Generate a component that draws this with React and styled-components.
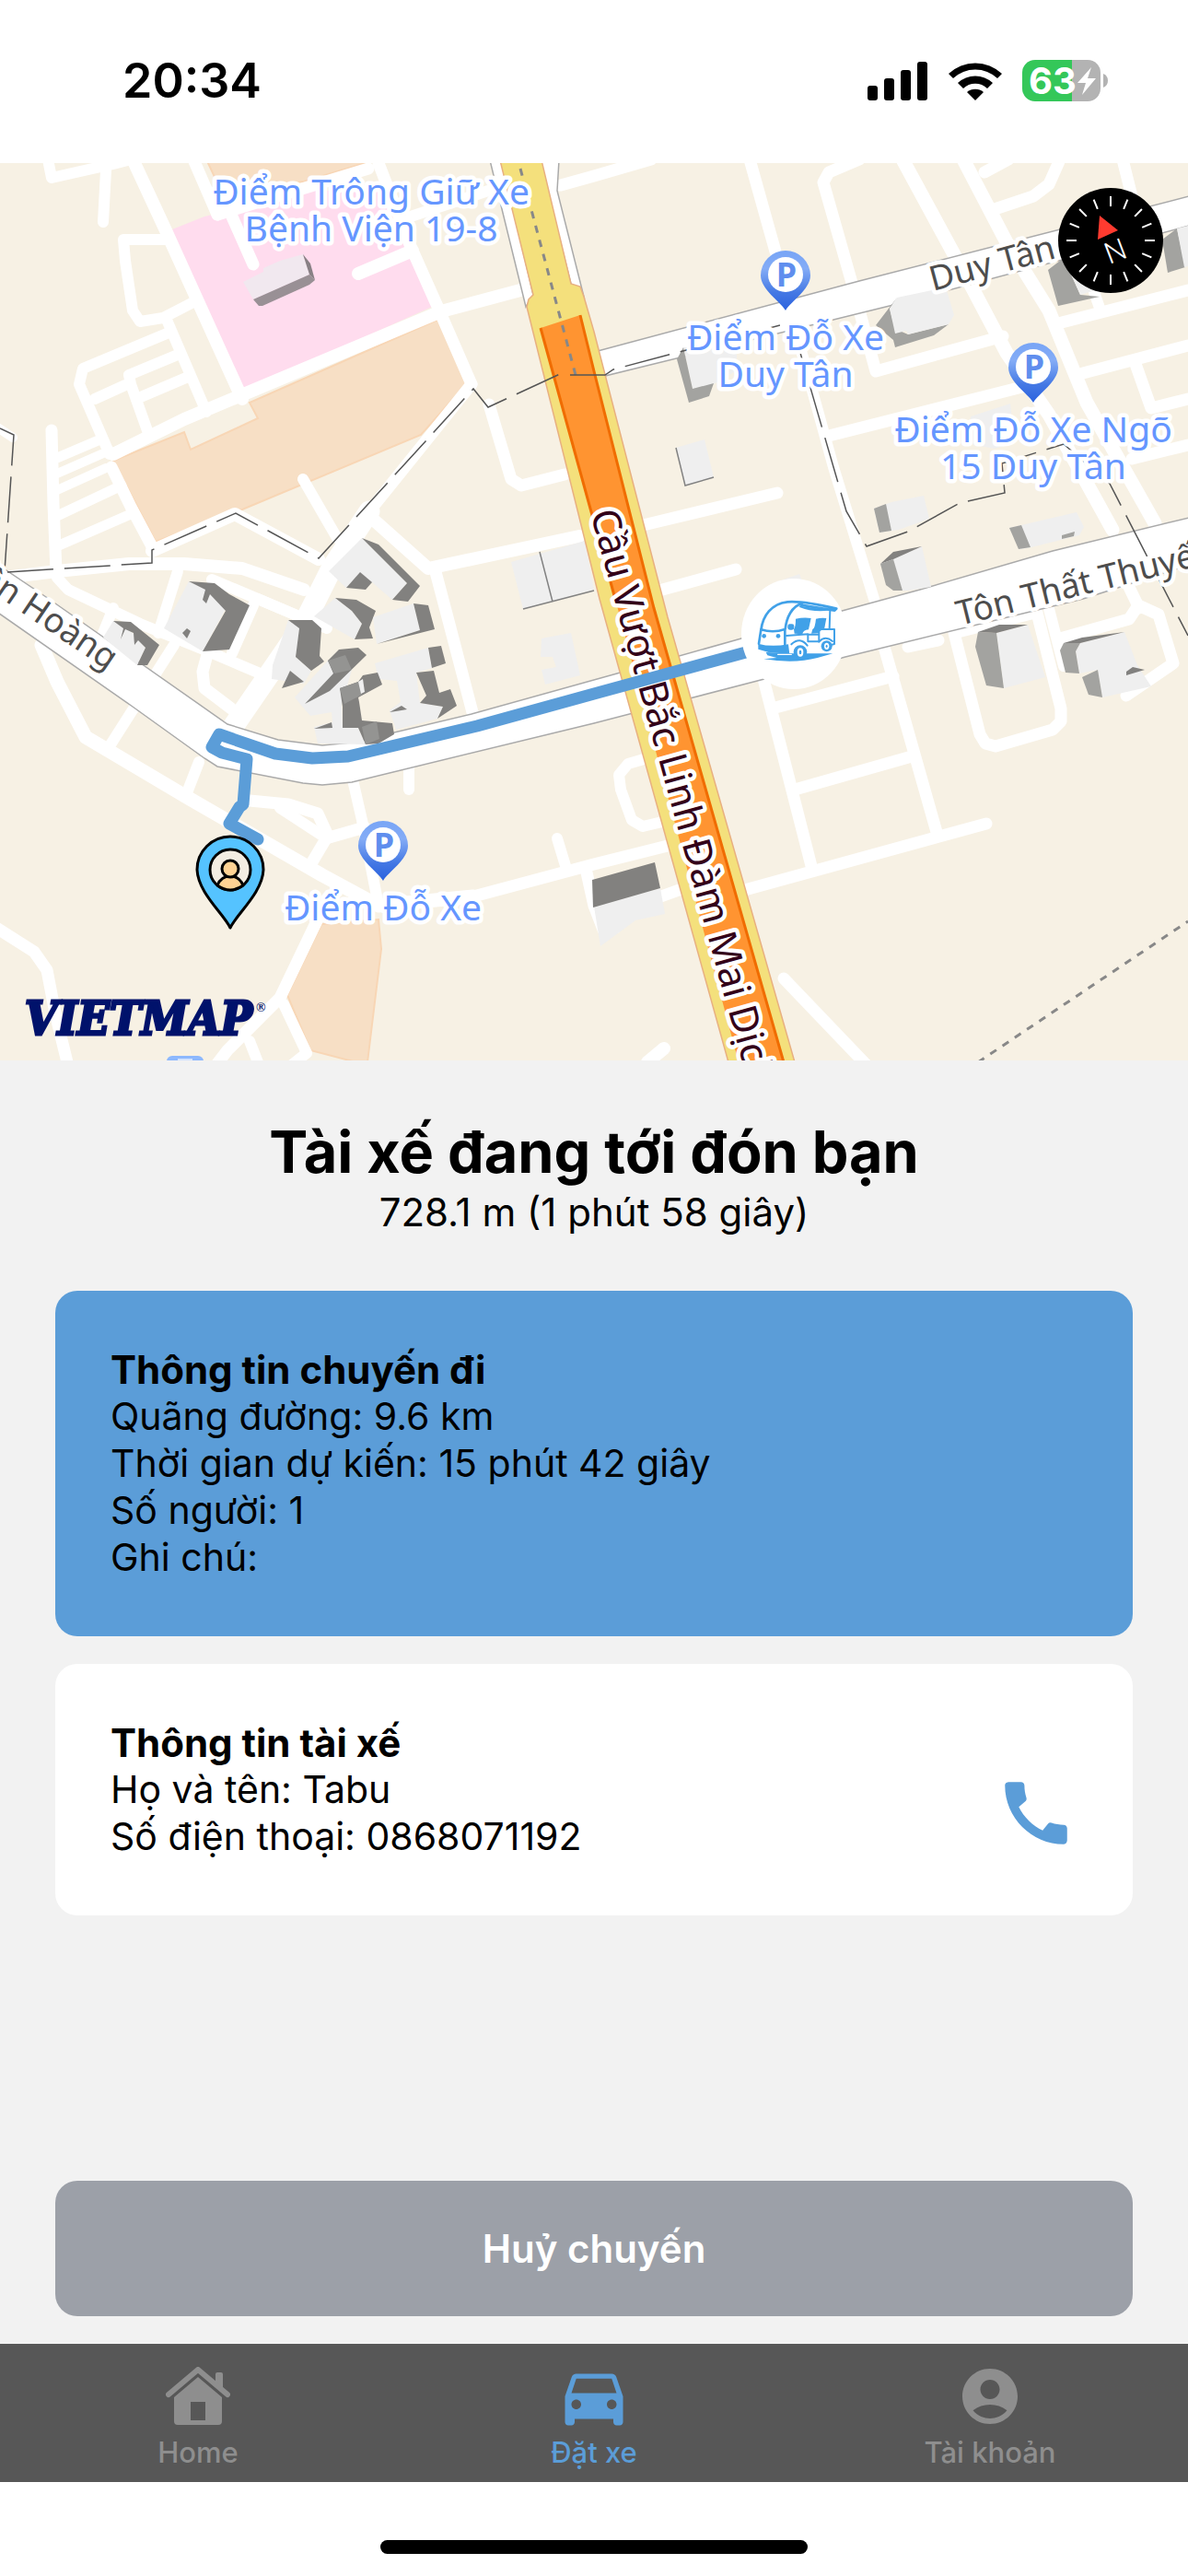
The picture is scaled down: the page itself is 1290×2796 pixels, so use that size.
import React from 'react'
import styled, { createGlobalStyle } from 'styled-components'
import { MdAccountCircle, MdCall, MdDirectionsCar } from 'react-icons/md'

const blue = '#5b9dd8'

// minor streets: [points, width]
const streets = [
  ['146,0 179,71 263,256', 14],
  ['123,316 200,278 479,161 580,134', 14],
  ['411,0 444,86 477,160 512,240', 13],
  ['512,240 401,378', 13],
  ['401,378 360,440 330,500 253,612', 23],
  ['329,343 366,407', 12],
  ['401,383 465,440 629,405', 14],
  ['472,440 486,493 514,600', 13],
  ['165,421 255,381 346,430', 14],
  ['121,330 142,373 167,420', 13],
  ['56,290 58,370 61,443', 13],
  ['62,320 109,300', 11],
  ['62,337 119,312', 10],
  ['62,355 115,331', 10],
  ['62,383 132,350', 11],
  ['64,415 142,381', 11],
  ['4,450 62,443 140,435 200,435 263,440 330,463', 14],
  ['62,450 74,463 152,500 226,530 280,553', 12],
  ['193,443 172,510', 12],
  ['189,523 117,636', 12],
  ['52,-4 56,16 123,1 150,-6', 12],
  ['115,8 112,64', 12],
  ['181,83 134,83 136,106 144,160 152,172 177,168 210,151', 12],
  ['181,170 224,270', 12],
  ['181,185 90,223 86,240 119,316', 12],
  ['193,208 140,230 142,240 162,296', 12],
  ['202,233 148,256', 12],
  ['103,256 136,241', 12],
  ['210,-4 236,56', 13],
  ['236,56 400,6', 13],
  ['251,56 275,110', 13],
  ['389,120 448,95', 14],
  ['446,58 530,30', 12],
  ['531,262 555,343 566,350 613,338', 13],
  ['609,24 645,14 707,-4', 13],
  ['-4,286 14,298', 10],
  ['230,452 320,490', 12],
  ['275,480 252,532', 12],
  ['280,473 355,505', 12],
  ['123,483 108,520', 12],
  ['226,530 220,552 222,570 251,592', 13],
  ['814,-4 842,96', 13],
  ['933,-4 900,10 894,21 925,130 951,226 1089,188', 13],
  ['980,-4 1056,136 1093,206 1139,273 1208,398', 15],
  ['1046,-4 1093,86 1139,160 1180,260 1254,391', 15],
  ['1069,10 1095,-4', 13],
  ['1077,51 1122,36 1139,23 1151,-4', 13],
  ['1219,-4 1229,36', 13],
  ['1145,175 1290,138', 13],
  ['1188,140 1195,160', 12],
  ['1176,228 1290,198', 13],
  ['1233,218 1250,266 1290,256', 13],
  ['1229,321 1290,306', 13],
  ['900,296 1110,243', 13],
  ['869,200 905,330 949,473', 12],
  ['690,395 844,358', 13],
  ['712,465 799,441', 13],
  ['1221,450 1237,483', 13],
  ['828,556 881,763', 13],
  ['960,525 1017,726', 13],
  ['842,591 970,557', 13],
  ['863,680 990,644', 13],
  ['805,790 1071,717', 13],
  ['986,525 1019,518', 13],
  ['1124,488 1036,510 1064,620 1070,630 1081,633 1143,615 1152,606 1152,592 1124,480', 13],
  ['1138,480 1155,546', 12],
  ['1151,516 1226,495 1236,480 1258,490 1274,543 1223,578', 13],
  ['706,645 682,652 672,664 674,680 686,713 698,720 719,715', 12],
  ['514,796 645,761 725,741', 13],
  ['605,733 615,766', 12],
  ['637,770 645,806 655,832 668,830 690,806 740,788', 13],
  ['851,885 940,978', 13],
  ['721,961 703,976', 14],
  ['45,523 62,563 93,623 206,690 350,773 411,806 514,796', 15],
  ['216,650 202,686', 12],
  ['271,692 313,696 345,706 356,730 337,762', 13],
  ['354,733 396,721', 13],
  ['304,700 350,730', 12],
  ['382,665 393,713 411,806', 12],
  ['444,650 444,680', 12],
  ['-4,830 37,856 51,876 60,923 74,980', 13],
  ['352,806 304,906 247,963 234,980', 13],
  ['308,913 333,966 318,978', 12],
  ['271,953 280,976', 12],
]

const dark = '#82817f'
const grey = '#a3a3a0'
const roof = '#efefef'

const buildings = [
  ['#f1e8ef', '264,129 286,118 286,114 304,106 329,99 336,121 275,148'],
  ['#999095', '275,148 336,121 342,127 336,132 285,155 281,155'],
  ['#888085', '329,99 337,109 342,127 336,121'],
  [roof, '393,407 442,456 426,474 404,455 376,461 357,443'],
  [dark, '393,407 411,414 456,459 443,476 426,474 442,456'],
  [dark, '391,444 404,455 397,463 376,461'],
  [roof, '205,454 228,465 247,480 220,530 178,505'],
  [dark, '205,454 233,456 249,468 271,480 249,528 220,530 245,486 228,468 224,478 220,474 223,463'],
  [dark, '198,510 203,505 207,508 203,516'],
  [roof, '123,497 144,510 158,526 149,545 112,515'],
  [dark, '123,497 142,498 173,523 160,545 149,545 158,526 150,518 146,523 145,510 136,506 131,517 134,505'],
  [roof, '364,472 382,486 393,500 385,517 341,492'],
  [dark, '364,472 387,474 408,486 401,504 405,516 385,517 393,500 382,486'],
  [roof, '405,493 449,478 456,507 409,522'],
  [dark, '449,478 465,480 472,506 409,522 456,507'],
  [roof, '313,496 325,505 321,536 338,551 330,565 295,560 296,545'],
  [dark, '313,496 339,496 349,505 347,535 352,541 338,551 321,536 325,505'],
  [dark, '315,551 330,563 306,570'],
  [roof, '320,580 356,540 389,526 371,588 372,613 389,613 397,631 345,630 341,612 361,607 360,596 337,600'],
  [roof, '407,543 465,526 469,548 452,553 456,586 481,590 475,603 430,615 423,594 435,585 431,562 411,560'],
  [dark, '356,540 368,528 389,526 398,534 358,573 331,587 362,554'],
  [dark, '369,570 389,563 394,556 410,553 415,566 389,580 390,585 393,605 426,608 428,620 411,630 397,631 389,613 372,613 372,590'],
  ['#949492', '356,540 375,534 382,550 363,554'],
  ['#949492', '369,570 389,563 393,577 374,587'],
  ['#949492', '393,612 409,606 412,625 397,631'],
  [roof, '389,563 394,560 396,574 392,576'],
  [dark, '465,526 479,524 484,543 469,548'],
  [dark, '452,553 471,551 477,575 489,571 496,589 475,603 481,590 456,586 463,578'],
  [dark, '423,596 436,589 442,593 430,595'],
  [dark, '341,614 360,607 361,613'],
  [roof, '555,433 635,410 645,463 568,484'],
  [roof, '588,516 620,510 630,556 592,566 588,550 604,547 600,536 587,536'],
  [roof, '742,200 800,200 800,225 775,240 752,245'],
  [grey, '735,213 742,200 752,245 775,239 770,253 748,260'],
  [roof, '734,309 765,300 775,341 744,350'],
  [grey, '974,146 966,158 972,180 986,186 1030,175 1014,187 972,200 970,192 951,176'],
  [roof, '974,146 1027,135 1036,165 1030,175 986,186 984,182 972,185 966,158'],
  [grey, '1138,116 1155,103 1173,143 1194,145 1149,155'],
  [roof, '1155,103 1200,100 1215,130 1173,143'],
  [grey, '1262,83 1278,71 1287,113 1268,119'],
  [roof, '1278,71 1290,68 1290,112 1286,113'],
  [roof, '1054,275 1097,261 1102,303 1080,310 1054,305'],
  [roof, '949,375 968,368 1003,361 1009,386 976,398 955,401'],
  [grey, '949,375 962,370 968,399 955,401'],
  [roof, '956,435 1001,416 1011,460 986,464 970,464'],
  [dark, '956,435 970,422 1001,416 970,430'],
  [grey, '956,435 970,430 980,464 970,464 962,458'],
  [roof, '1096,396 1169,379 1177,395 1172,404 1120,417 1108,419'],
  [grey, '1096,396 1109,393 1119,417 1106,419'],
  [grey, '1153,404 1167,400 1166,405 1153,408'],
  [roof, '1082,510 1116,501 1135,558 1090,570'],
  [grey, '1062,509 1082,510 1084,525 1090,570 1071,567 1059,525'],
  [dark, '1062,509 1085,501 1116,501 1082,510'],
  [roof, '1173,521 1221,509 1235,545 1250,568 1197,580 1192,550 1172,554 1168,530'],
  [dark, '1155,521 1175,515 1221,509 1173,521'],
  [grey, '1151,529 1155,521 1173,521 1168,530 1172,554 1157,553'],
  [grey, '1175,558 1192,550 1197,580 1182,577'],
  [dark, '1223,552 1230,547 1243,550 1223,556'],
  [roof, '645,807 717,787 722,815 690,822 652,850'],
  [dark, '643,778 711,759 717,787 644,808'],
  [roof, '842,455 868,446 872,456'],
]

const trip = [
  'Quãng đường: 9.6 km',
  'Thời gian dự kiến: 15 phút 42 giây',
  'Số người: 1',
  'Ghi chú:',
]

const tabs = [
  { label: 'Home', icon: HomeIcon },
  { label: 'Đặt xe', icon: CarIcon, active: true },
  { label: 'Tài khoản', icon: AccountIcon },
]

function HomeIcon() {
  return (
    <svg width="70" height="64" viewBox="0 0 70 64" fill="currentColor" aria-hidden="true">
      <path d="M54 8q0-2 2-2h4q2 0 2 2v17l-8-7z" />
      <path d="M3 30 35 3l32 27" fill="none" stroke="currentColor" strokeWidth="6" strokeLinecap="round" strokeLinejoin="round" />
      <path fillRule="evenodd" d="M35 11 61 33v26q0 4-4 4H13q-4 0-4-4V33zM27 38v20h16V38z" />
    </svg>
  )
}

function CarIcon() {
  return <MdDirectionsCar size={84} aria-hidden="true" />
}

function AccountIcon() {
  return <MdAccountCircle size={72} aria-hidden="true" />
}

function Parking({ x, y, lines }) {
  return (
    <g>
      <path
        d={`M${x} ${y + 65}C${x - 6} ${y + 55} ${x - 27} ${y + 42} ${x - 27} ${y + 27}a27 27 0 0 1 54 0C${x + 27} ${y + 42} ${x + 6} ${y + 55} ${x} ${y + 65}z`}
        fill="url(#parking)"
      />
      <circle cx={x} cy={y + 26} r="19" fill="#fff" />
      <PinLetter x={x + 1} y={y + 39}>P</PinLetter>
      {lines.map((line, i) => (
        <PlaceLabel key={line} x={x} y={y + 108 + i * 40}>{line}</PlaceLabel>
      ))}
    </g>
  )
}

function Shuttle() {
  return (
    <g>
      <ellipse cx="862" cy="511" rx="57" ry="60" fill="#fff" />
      <g transform="translate(780 443) scale(.3333)" fill="none" stroke="#41a1e8" strokeWidth="8" strokeLinecap="round" strokeLinejoin="round">
        <path d="M148 286l42-4-30-8-5-10 90 4 128 0-50 14q-75 20-175 4z" fill="#41a1e8" stroke="none" />
        <path d="M139 192c6-48 34-86 86-92 50-4 110 10 160 22l-6 6-110-18" />
        <path d="M262 116q50 20 102 11l-96-14z" fill="#41a1e8" stroke="none" />
        <path d="M218 188c4-36 22-76 54-82M139 190q40 12 78-1v50M139 190l-7 46" />
        <path d="M130 236q42 12 98 2l4 32-68-6-34-10z" fill="#41a1e8" stroke="none" />
        <circle cx="149" cy="211" r="7" fill="#41a1e8" stroke="none" />
        <circle cx="195" cy="211" r="7" fill="#41a1e8" stroke="none" />
        <path d="M252 155q25-5 50-2l-8 37q-18 2-20 15l-26-2-2-15q6-4 6-33z" fill="#41a1e8" stroke="none" />
        <path d="M318 155q16-4 34-2l-7 37q-14 2-18 12l-24 1 4-14q8-2 11-34z" fill="#41a1e8" stroke="none" />
        <rect x="226" y="172" width="21" height="19" rx="7" fill="#41a1e8" stroke="none" />
        <path d="M364 128l-2 58M222 210l70-5v24h36v-40h50v48l-8 2M296 206h30" strokeWidth="6" />
        <path d="M238 238q28-26 52 4M328 230q20-22 44-2" strokeWidth="6" />
        <circle cx="267" cy="263" r="22" fill="#41a1e8" stroke="none" />
        <circle cx="353" cy="244" r="18" fill="#41a1e8" stroke="none" />
        <ellipse cx="267" cy="264" rx="10" ry="14" fill="#fff" stroke="none" />
        <ellipse cx="353" cy="244" rx="8" ry="11" fill="#fff" stroke="none" />
        <ellipse cx="267" cy="264" rx="4" ry="7" fill="#41a1e8" stroke="none" />
        <ellipse cx="353" cy="244" rx="3" ry="5" fill="#41a1e8" stroke="none" />
        <path d="M194 271h44" stroke="#fff" strokeWidth="4" />
      </g>
    </g>
  )
}

function PickupPin() {
  return (
    <g stroke="#000" strokeWidth="3" strokeLinejoin="round">
      <path d="M250 830C243 815 215 792 214 767A36 36 0 0 1 286 767C285 792 257 815 250 830Z" fill="#55c3ff" />
      <circle cx="250" cy="767" r="22" fill="#f3ede2" />
      <path d="M236 784q4-10 14-10t14 10q-14 10-28 0z" fill="#ffd394" />
      <circle cx="250" cy="766" r="9" fill="#ffd394" />
    </g>
  )
}

function CityMap() {
  return (
    <MapSvg viewBox="0 0 1290 974" role="img" aria-label="Bản đồ">
      <defs>
        <linearGradient id="parking" x1="0" y1="0" x2="0" y2="1">
          <stop offset="0" stopColor="#78a5f6" />
          <stop offset=".3" stopColor="#84acf6" />
          <stop offset=".7" stopColor="#4478e4" />
          <stop offset="1" stopColor="#2b62de" />
        </linearGradient>
      </defs>
      <rect width="1290" height="974" fill="#f7f1e4" />
      <polygon points="187,72 222,58 340,30 424,30 446,93 469,156 263,248" fill="#ffdcee" />
      <g fill="#f7dfc5" stroke="#f8d6b5" strokeWidth="2">
        <polygon points="225,-2 403,-2 330,20 240,30" />
        <polygon points="123,323 200,292 207,311 280,277 271,260 475,170 508,238 457,295 263,376 169,411" />
        <polygon points="349,826 411,821 414,853 399,976 387,976 337,963 312,903" />
      </g>

      <g fill="none" stroke="#fff" strokeLinecap="round" strokeLinejoin="round">
        {streets.map(([points, width]) => (
          <polyline key={points} points={points} strokeWidth={width} />
        ))}
      </g>

      <g fill="#fff" stroke="#aaa" strokeWidth="1.5">
        <polygon points="649,204 933,128 1295,35 1295,67 974,153 657,231" />
        <polygon points="-5,434 53,473 247,609 302,626 350,632 382,629 512,598 670,554 805,516 918,485 999,463 1143,421 1295,384 1295,435 1176,473 918,536 830,560 645,608 382,672 350,675 329,673 236,655 222,646 144,590 -5,486" />
        <polygon points="532,-3 545,-3 579,143 571,156" />
        <polygon points="586,-3 607,-3 605,30 634,145 620,131" />
      </g>

      <g>
        {buildings.map(([fill, points]) => (
          <polygon key={points} points={points} fill={fill} />
        ))}
        <path d="M586 422l14 54M568 484l77-20M734 309l10 41 31-9" fill="none" stroke="#828282" strokeWidth="1.5" />
      </g>

      <polygon points="543,-3 588,-3 620,131 630,134 634,145 645,183 725,493 863,976 791,976 651,473 572,156 574,148 579,143" fill="#f4e07c" stroke="#e8b080" strokeWidth="1.5" />
      <polygon points="587,179 630,165 645,226 710,483 851,976 802,976 668,473" fill="#ff9431" />
      <path d="M630 165 645 226 710 483 851 976M587 179 668 473" fill="none" stroke="#f06c00" strokeWidth="3" />

      <g fill="none" stroke="#555" strokeWidth="1.5">
        <path d="M565 6 625 230" stroke="#888" strokeWidth="3" strokeDasharray="8 8" />
        <path d="M1062 976 1290 823" stroke="#888" strokeWidth="3" strokeDasharray="8 8" />
        <path d="M8 444 165 434V420L256 380 346 429 514 245 530 265 610 228M619 230h38l9-6 185-49 18 31 50 172 22 38 45-16 56-31 49-11-3-32 67-21 50 43 85 165" strokeDasharray="50 12" />
        <path d="M0 288 15 295 5 443" strokeDasharray="50 12" />
      </g>

      <BridgeLabel transform="translate(641 380) rotate(74.5)">Cầu Vượt Bắc Linh Đàm Mai Dịch</BridgeLabel>
      <StreetLabel transform="translate(1013 139) rotate(-15)">Duy Tân</StreetLabel>
      <StreetLabel transform="translate(1042 502) rotate(-14)">Tôn Thất Thuyết</StreetLabel>
      <StreetLabel transform="translate(117 551) rotate(34)" textAnchor="end">Trần Hoàng</StreetLabel>

      <polyline
        points="280,734 249,717 260,699 264,696 268,647 241,640 230,634 238,620 299,641 339,646 378,644 518,611 645,576 810,531"
        fill="none"
        stroke={blue}
        strokeWidth="13"
        strokeLinecap="round"
        strokeLinejoin="round"
      />

      <PlaceLabel x="403" y="45">Điểm Trông Giữ Xe</PlaceLabel>
      <PlaceLabel x="403" y="85">Bệnh Viện 19-8</PlaceLabel>
      <Parking x={853} y={95} lines={['Điểm Đỗ Xe', 'Duy Tân']} />
      <Parking x={1122} y={195} lines={['Điểm Đỗ Xe Ngõ', '15 Duy Tân']} />
      <Parking x={416} y={714} lines={['Điểm Đỗ Xe']} />
      <rect x="181" y="969" width="40" height="40" rx="6" fill="#8db8fd" />
      <rect x="193" y="972" width="16" height="16" fill="#d3e3ff" />

      <PickupPin />
      <Shuttle />
      <Brand x="27" y="946">VIETMAP</Brand>
      <BrandMark x="278" y="921">®</BrandMark>
    </MapSvg>
  )
}

function Compass() {
  const ticks = Array.from({ length: 16 }, (_, i) => i * 22.5)
  return (
    <CompassButton type="button" aria-label="La bàn">
      <svg width="114" height="114" viewBox="-57 -57 114 114">
        {ticks.map(deg => (
          <path key={deg} d="M0-48V-37" stroke="#fff" strokeWidth="2" transform={`rotate(${deg})`} />
        ))}
        <path d="M-12-27 8-11-14-1z" fill="#ff3b30" />
        <CompassLetter transform="translate(9 22) rotate(-21)">N</CompassLetter>
      </svg>
    </CompassButton>
  )
}

function Status() {
  return (
    <StatusBar>
      <Clock>20:34</Clock>
      <StatusIcons>
        <svg width="66" height="42" viewBox="0 0 66 42" aria-hidden="true">
          <rect x="0" y="26" width="11" height="16" rx="3" />
          <rect x="18" y="18" width="11" height="24" rx="3" />
          <rect x="36" y="9" width="11" height="33" rx="3" />
          <rect x="54" y="0" width="11" height="42" rx="3" />
        </svg>
        <svg width="58" height="42" viewBox="0 0 58 42" aria-hidden="true">
          <path d="M0 13a42 42 0 0 1 58 0l-5 5a35 35 0 0 0-48 0z" />
          <path d="M10 23a28 28 0 0 1 38 0l-6 6a19 19 0 0 0-26 0z" />
          <path d="M20 33a14 14 0 0 1 18 0l-9 9z" />
        </svg>
        <Battery width="94" height="45" viewBox="0 0 94 45" aria-label="Pin">
          <path d="M54 0h17a14 14 0 0 1 14 14v17a14 14 0 0 1-14 14H54z" fill="#b3b3b3" />
          <path d="M54 0H14A14 14 0 0 0 0 14v17a14 14 0 0 0 14 14h40z" fill="#34c759" />
          <path d="M88 15q5 2 5 7.500t-5 7.500z" fill="#b3b3b3" />
          <Percent x="7" y="37">63</Percent>
          <path d="M75 8 60 25h9l-4 13 15-18h-9z" fill="#fff" />
        </Battery>
      </StatusIcons>
    </StatusBar>
  )
}

export default function App() {
  return (
    <>
      <GlobalStyle />
      <Screen>
        <Status />
        <MapArea>
          <CityMap />
          <Compass />
        </MapArea>
        <Panel>
          <Heading>
            <Title>Tài xế đang tới đón bạn</Title>
            <Remaining>728.1 m (1 phút 58 giây)</Remaining>
          </Heading>
          <Card $highlight>
            <CardTitle>Thông tin chuyến đi</CardTitle>
            {trip.map(line => (
              <Text key={line}>{line}</Text>
            ))}
          </Card>
          <Card>
            <CardTitle>Thông tin tài xế</CardTitle>
            <DriverRow>
              <div>
                <Text>Họ và tên: Tabu</Text>
                <Text>Số điện thoại: 0868071192</Text>
              </div>
              <CallButton type="button" aria-label="Gọi tài xế">
                <MdCall size={90} />
              </CallButton>
            </DriverRow>
          </Card>
          <CancelButton type="button">Huỷ chuyến</CancelButton>
        </Panel>
        <TabBar>
          {tabs.map(({ label, icon: Icon, active }) => (
            <Tab key={label} type="button" $active={active}>
              <TabIcon>
                <Icon />
              </TabIcon>
              {label}
            </Tab>
          ))}
        </TabBar>
        <HomeArea>
          <HomeIndicator />
        </HomeArea>
      </Screen>
    </>
  )
}

const GlobalStyle = createGlobalStyle`
  * {
    box-sizing: border-box;
  }
  body {
    margin: 0;
    background: #ffffff;
    font-family: Inter, sans-serif;
    color: #000000;
  }
  button {
    border: none;
    padding: 0;
    background: none;
    font-family: inherit;
    cursor: pointer;
  }
`

const Screen = styled.div`
  min-height: 100vh;
  display: flex;
  flex-direction: column;
`

const StatusBar = styled.header`
  height: 177px;
  padding: 0 86px 2px 133px;
  display: flex;
  align-items: center;
  justify-content: space-between;
`

const Clock = styled.div`
  font-size: 52px;
  font-weight: 600;
`

const StatusIcons = styled.div`
  display: flex;
  align-items: center;
  gap: 22px;
`

const Battery = styled.svg`
  overflow: visible;
`

const Percent = styled.text`
  font-size: 40px;
  font-weight: 700;
  fill: #ffffff;
`

const MapArea = styled.section`
  position: relative;
`

const MapSvg = styled.svg`
  display: block;
  width: 100%;
  height: auto;
`

const CompassButton = styled.button`
  position: absolute;
  top: 27px;
  right: 27px;
  width: 114px;
  height: 114px;
  border-radius: 50%;
  background: #000000;
`

const CompassLetter = styled.text`
  font-family: Roboto, sans-serif;
  font-size: 32px;
  font-weight: 300;
  fill: #ffffff;
  text-anchor: middle;
`

const MapText = styled.text`
  font-family: 'Noto Sans', sans-serif;
  paint-order: stroke;
  stroke: #ffffff;
  stroke-width: 9px;
  stroke-linejoin: round;
`

const PlaceLabel = styled(MapText)`
  font-size: 39px;
  fill: #6596ff;
  text-anchor: middle;
`

const StreetLabel = styled(MapText)`
  font-size: 37px;
  fill: #4d4d4d;
`

const BridgeLabel = styled(MapText)`
  font-size: 42px;
  fill: #330019;
`

const PinLetter = styled.text`
  font-family: 'Noto Sans', sans-serif;
  font-size: 36px;
  font-weight: 700;
  fill: #5f8eee;
  text-anchor: middle;
`

const Brand = styled.text`
  font-family: 'DejaVu Serif Condensed', 'DejaVu Serif', serif;
  font-size: 51px;
  font-weight: 700;
  font-style: italic;
  fill: #00126b;
  stroke: #00126b;
  stroke-width: 3px;
`

const BrandMark = styled.text`
  font-family: 'Liberation Serif', serif;
  font-size: 14px;
  font-weight: 700;
  fill: #00126b;
`

const Panel = styled.main`
  flex: 1;
  padding: 60px 60px 30px;
  background: #f2f2f2;
  display: flex;
  flex-direction: column;
  gap: 30px;
`

const Heading = styled.div`
  padding-bottom: 30px;
  text-align: center;
`

const Title = styled.h1`
  margin: 0;
  font-size: 63px;
  line-height: 79px;
  font-weight: 700;
`

const Text = styled.p`
  margin: 0;
  font-size: 41px;
  line-height: 51px;
`

const Remaining = styled(Text)`
  font-size: 42px;
`

const Card = styled.section`
  padding: 60px;
  border-radius: 24px;
  background: ${props => (props.$highlight ? blue : '#ffffff')};
`

const CardTitle = styled.h2`
  margin: 0;
  font-size: 42px;
  line-height: 51px;
  font-weight: 700;
`

const DriverRow = styled.div`
  display: flex;
  align-items: center;
  justify-content: space-between;
`

const CallButton = styled.button`
  display: flex;
  color: ${blue};
`

const CancelButton = styled.button`
  margin-top: auto;
  padding: 48px;
  border-radius: 24px;
  background: #9ca0a8;
  color: #ffffff;
  font-size: 42px;
  line-height: 51px;
  font-weight: 600;
`

const TabBar = styled.nav`
  height: 150px;
  background: #575757;
  display: flex;
`

const Tab = styled.button`
  flex: 1;
  display: flex;
  flex-direction: column;
  align-items: center;
  padding-top: 14px;
  font-size: 31px;
  line-height: 36px;
  font-weight: 500;
  color: ${props => (props.$active ? blue : '#8e8e8e')};
`

const TabIcon = styled.span`
  height: 86px;
  display: flex;
  align-items: center;
`

const HomeArea = styled.footer`
  height: 102px;
  padding-bottom: 24px;
  display: flex;
  justify-content: center;
  align-items: flex-end;
`

const HomeIndicator = styled.div`
  width: 36%;
  height: 15px;
  border-radius: 8px;
  background: #000000;
`
